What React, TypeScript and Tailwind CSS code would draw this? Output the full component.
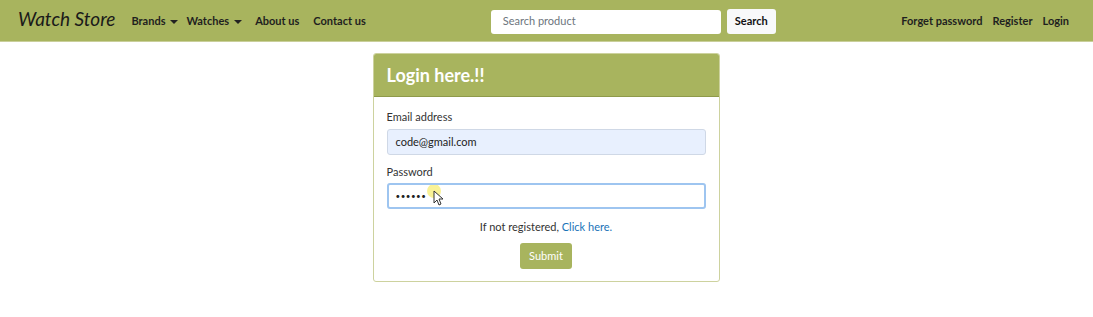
import React from "react";

const font = { fontFamily: 'Lato, "Open Sans", sans-serif' };

function Caret() {
  return <span className="inline-block ml-[5px] align-middle border-l-[4px] border-r-[4px] border-t-[4px] border-l-transparent border-r-transparent border-t-[#222]" />;
}

export default function App() {
  return (
    <div className="w-[1093px] h-[317px] bg-white text-[#212529]" style={font}>
      <nav className="h-[42px] bg-[#a8b45e] flex items-center pl-[18px] pr-[24px] pt-[2px] border-b border-[#c9cf9a]">
        <span className="text-[19px] italic text-[#1a1a1a] mr-[16px] -mt-[5px]">Watch Store</span>
        <div className="flex items-center text-[11px] font-bold text-[#1f1f1f]">
          <span className="mr-[8px]">Brands<Caret /></span>
          <span className="mr-[13px]">Watches<Caret /></span>
          <span className="mr-[14px]">About us</span>
          <span>Contact us</span>
        </div>
        <div className="flex items-center ml-[125px] gap-[6px]">
          <div className="w-[230px] h-[24px] bg-white rounded-[3px] flex items-center px-[12px] text-[11px] text-[#6c757d]">Search product</div>
          <div className="h-[25px] px-[8px] bg-[#f8f9fa] rounded-[3px] flex items-center text-[11px] font-bold text-[#111]">Search</div>
        </div>
        <div className="ml-auto flex items-center gap-[10px] text-[11px] font-bold text-[#1f1f1f]">
          <span>Forget password</span>
          <span>Register</span>
          <span>Login</span>
        </div>
      </nav>
      <div className="flex justify-center pt-[11px]">
        <div className="w-[347px] ml-[-1px] border border-[#cdd29e] rounded-[3px] overflow-hidden">
          <div className="h-[43px] bg-[#a8b45e] border-b border-[#8e9a4a] flex items-center px-[13px]">
            <span className="text-[18px] font-bold text-white">Login here.!!</span>
          </div>
          <div className="px-[13px] pt-[12px] pb-[12px] text-[11px]">
            <div className="text-[#333] leading-[16px]">Email address</div>
            <div className="mt-[4px] h-[26px] bg-[#e8f0fe] border border-[#cfd8e6] rounded-[3px] flex items-center px-[8px] text-[11px] text-[#222]">code@gmail.com</div>
            <div className="mt-[9px] text-[#333] leading-[16px]">Password</div>
            <div className="relative mt-[3px] h-[26px] bg-white border-2 border-[#9ec5f0] rounded-[3px] flex items-center px-[7px] text-[11px] text-[#222]">
              <span className="tracking-[0.5px] text-[8px]">••••••</span>
              <svg className="absolute left-[36px] top-[0px]" width="22" height="24" viewBox="0 0 22 24">
                <circle cx="9" cy="6" r="7" fill="#f7ec6a" opacity="0.7" />
                <path d="M9 6 L9 18 L12 15 L14 20 L16 19 L14 14 L18 14 Z" fill="#fff" stroke="#333" strokeWidth="1" strokeLinejoin="round" />
              </svg>
            </div>
            <div className="mt-[10px] text-center text-[#333] leading-[16px]">
              If not registered, <span className="text-[#1a73b8]">Click here.</span>
            </div>
            <div className="mt-[8px] flex justify-center">
              <div className="h-[26px] px-[9px] bg-[#a8b45e] rounded-[3px] flex items-center text-[11px] text-white">Submit</div>
            </div>
          </div>
        </div>
      </div>
    </div>
  );
}
